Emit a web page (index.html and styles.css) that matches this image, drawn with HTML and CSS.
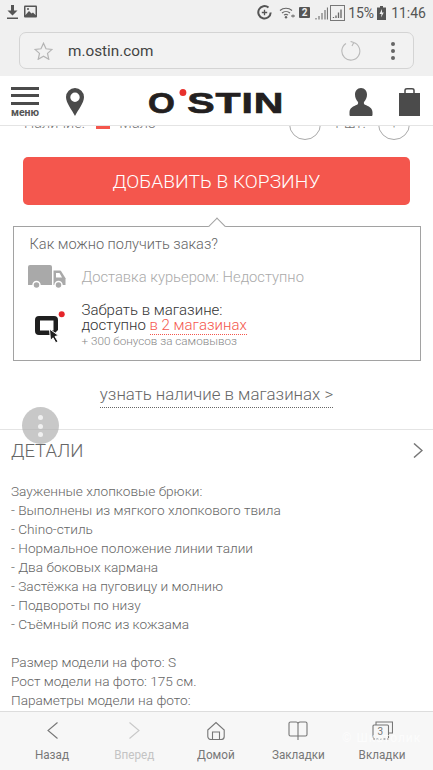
FILE: index.html
```html
<!DOCTYPE html>
<html lang="ru">
<head>
  <meta charset="UTF-8" />
  <meta name="viewport" content="width=device-width, initial-scale=1.0" />
  <title>O'STIN</title>
  <link rel="stylesheet" href="styles.css">
</head>
<body>
  <!-- Android status bar -->
  <div class="status">
    <div class="status-left">
      <svg width="11" height="14" viewBox="0 0 11 14"><path d="M4 0h3v5.500h3.500L5.500 10.500.5 5.500H4z M0 12.500h11V14H0z" fill="#555"/></svg>
      <svg width="13" height="13" viewBox="0 0 13 13"><rect width="13" height="12" y="0.500" rx="1" fill="#555"/><rect x="1.500" y="2" width="10" height="8" fill="#eee"/><path d="M1.500 10 5 6l2.500 2.500L9 7.500l2.500 2.500z" fill="#555"/><circle cx="4" cy="4" r="1" fill="#555"/></svg>
    </div>
    <div class="status-right">
      <svg class="ic-data" width="15" height="15" viewBox="0 0 15 15"><path d="M11.500 2.500A6.200 6.200 0 1 0 13.700 7.500" fill="none" stroke="#555" stroke-width="2"/><path d="M7.500 4.800v5.400M4.800 7.500h5.400" stroke="#555" stroke-width="1.300"/></svg>
      <svg class="ic-wifi" width="16" height="13" viewBox="0 0 16 13"><path d="M1 4.500a9 9 0 0 1 12 0M3 7a6 6 0 0 1 8 0M5 9.200a3 3 0 0 1 4 0" fill="none" stroke="#666" stroke-width="1.100"/><circle cx="7" cy="11.300" r="1.200" fill="#666"/><path d="M12 10h4M14 8.500v3" stroke="#666"/></svg>
      <span class="sim">2</span>
      <svg class="ic-bars" width="13" height="13" viewBox="0 0 13 13"><path d="M1 11v1.500M4 9v3.500M7 6v6.500M10 3v9.500M12.500 0.500v12" stroke="#777" stroke-width="1.200"/></svg>
      <svg class="ic-bars-box" width="15" height="16" viewBox="0 0 15 16"><rect x="0.500" y="0.500" width="14" height="15" fill="none" stroke="#777"/><path d="M3.500 12v1M6 10.500v2.500M8.500 7.500v5.500M11 4.500v8.500" stroke="#666" stroke-width="1.300"/></svg>
      <span class="pct">15%</span>
      <svg class="ic-batt" width="9" height="14" viewBox="0 0 9 14"><path d="M3 0h3v1.500h3V14H0V1.500h3z" fill="#555"/><path d="M5 3 2.500 8h2L4 11.500 6.800 6.500H5z" fill="#eee"/></svg>
      <span class="clock">11:46</span>
    </div>
  </div>

  <!-- Browser address bar -->
  <div class="address-wrap">
    <div class="address">
      <svg class="star" width="19" height="18" viewBox="0 0 19 18"><path d="M9.500 1.200 12 6.800l6 .6-4.500 4 1.300 5.900-5.300-3-5.300 3 1.300-5.900L1 7.400l6-.6z" fill="none" stroke="#b4b4b4" stroke-width="1.200"/></svg>
      <span class="url">m.ostin.com</span>
      <svg class="reload" width="20" height="20" viewBox="0 0 20 20"><path d="M12.500 1.500A9 9 0 1 1 5 2.500" fill="none" stroke="#b9b9b9" stroke-width="1.100"/><path d="M12.800 1.600 9.600 0.400M12.800 1.600 11 5" fill="none" stroke="#b9b9b9" stroke-width="1.100"/></svg>
      <div class="kebab"><i></i><i></i><i></i></div>
    </div>
  </div>

  <!-- Site header -->
  <header class="site-head">
    <div class="burger">
      <span class="burger-lines"><i></i><i></i><i></i></span>
      <span class="burger-label">меню</span>
    </div>
    <svg class="pin" width="18" height="28" viewBox="0 0 18 28"><path fill-rule="evenodd" d="M9 0a9 9 0 0 1 9 9c0 6-6 13-9 19C6 22 0 15 0 9a9 9 0 0 1 9-9zm0 4.500a4.700 4.700 0 1 0 0 9.400 4.700 4.700 0 0 0 0-9.400z" fill="#4b4b4b"/></svg>
    <div class="logo"><span class="logo-o">O</span><span class="logo-dot"></span>STIN</div>
    <svg class="user" width="24" height="28" viewBox="0 0 24 28"><path d="M12 0c3.800 0 6 3 6 6.500 0 3-1.200 5.500-2.800 7.200-.7 1-.4 2.300.8 3 3.500 1.500 7.500 3 7.500 7.500V27c0 .5-.5 1-1 1H1.500c-.5 0-1-.5-1-1v-2.800c0-4.500 4-6 7.500-7.500 1.200-.7 1.500-2 .8-3C7.200 12 6 9.500 6 6.500 6 3 8.200 0 12 0z" fill="#4b4b4b"/></svg>
    <svg class="bag" width="21" height="28" viewBox="0 0 21 28"><path d="M0 5h21v23H0z" fill="#4b4b4b"/><path d="M6 6V2.500C6 1.500 7 .8 8 .8h5c1 0 2 .7 2 1.700V6" fill="none" stroke="#4b4b4b" stroke-width="1.500"/></svg>
  </header>

  <main class="page">
    <!-- Row scrolled almost out of view under the header -->
    <div class="stock-row">
      <div class="stock">Наличие: <i class="stock-mark"></i> Мало</div>
      <div class="qty">
        <span class="qty-btn"></span>
        <span class="qty-val">1 шт.</span>
        <span class="qty-btn">+</span>
      </div>
    </div>

    <button class="buy">ДОБАВИТЬ В КОРЗИНУ</button>

    <section class="delivery">
      <h3 class="delivery-title">Как можно получить заказ?</h3>
      <div class="delivery-row">
        <svg class="truck" width="38" height="24" viewBox="0 0 38 24"><path d="M0 2a2 2 0 0 1 2-2h20a2 2 0 0 1 2 2v18H0z" fill="#a9a9a9"/><path d="M25.500 5.500h6c1 0 1.500.4 2 1.200l4 6.500V20h-12z" fill="#a9a9a9"/><path d="M28 8h3.500l2.500 4.500h-6z" fill="#fff"/><circle cx="8.500" cy="20" r="3.500" fill="#a9a9a9" stroke="#fff" stroke-width="1.500"/><circle cx="30.500" cy="20" r="3.500" fill="#a9a9a9" stroke="#fff" stroke-width="1.500"/></svg>
        <span class="courier">Доставка курьером: Недоступно</span>
      </div>
      <div class="delivery-row pickup">
        <svg class="qicon" width="32" height="33" viewBox="0 0 32 33"><path fill-rule="evenodd" d="M5 6h15a4 4 0 0 1 4 4v10l-5 5H5a4 4 0 0 1-4-4V10a4 4 0 0 1 4-4zm1 4.500v10h13.500v-10z" fill="#1f1f1f"/><circle cx="27.700" cy="4.300" r="3" fill="#e5252a"/><path d="M15.500 19l9 6.500-3.500 1 3 5-2.200 1.300-2.800-5-2.500 2.700z" fill="#1f1f1f" stroke="#fff" stroke-width="1"/></svg>
        <div class="pickup-text">
          <div>Забрать в магазине:</div>
          <div>доступно <a class="stores">в 2 магазинах</a></div>
          <div class="bonus">+ 300 бонусов за самовывоз</div>
        </div>
      </div>
    </section>

    <div class="avail"><a class="avail-link">узнать наличие в магазинах &gt;</a></div>

    <div class="details-head">
      <span>ДЕТАЛИ</span>
      <svg width="10" height="15" viewBox="0 0 10 15"><path d="M1 .5l8 7-8 7" fill="none" stroke="#777" stroke-width="1.500"/></svg>
    </div>

    <div class="details-text">
      <p>Зауженные хлопковые брюки:</p>
      <p>- Выполнены из мягкого хлопкового твила</p>
      <p>- Chino-стиль</p>
      <p>- Нормальное положение линии талии</p>
      <p>- Два боковых кармана</p>
      <p>- Застёжка на пуговицу и молнию</p>
      <p>- Подвороты по низу</p>
      <p>- Съёмный пояс из кожзама</p>
      <p>&nbsp;</p>
      <p>Размер модели на фото: S</p>
      <p>Рост модели на фото: 175 см.</p>
      <p>Параметры модели на фото:</p>
    </div>
  </main>

  <!-- Floating browser button -->
  <div class="fab"><i></i><i></i><i></i></div>

  <!-- Browser bottom toolbar -->
  <nav class="toolbar">
    <div class="tool">
      <svg width="11" height="19" viewBox="0 0 11 19"><path d="M10.500 1.500 1 9.500l9.500 8" fill="none" stroke="#777" stroke-width="1.100"/></svg>
      <span>Назад</span>
    </div>
    <div class="tool off">
      <svg width="11" height="19" viewBox="0 0 11 19"><path d="M.5 1.500l9.500 8-9.500 8" fill="none" stroke="#c8c8c8" stroke-width="1.100"/></svg>
      <span>Вперед</span>
    </div>
    <div class="tool">
      <svg width="18" height="19" viewBox="0 0 18 19"><path d="M.8 9 9 1.500 17.200 9v6.500a3 3 0 0 1-3 3H3.800a3 3 0 0 1-3-3z" fill="none" stroke="#777" stroke-width="1.100"/><path d="M5.500 18.500V11h7v7.500" fill="none" stroke="#777" stroke-width="1.100"/></svg>
      <span>Домой</span>
    </div>
    <div class="tool">
      <svg width="20" height="19" viewBox="0 0 20 19"><path d="M10 3V15H2.500a1.500 1.500 0 0 1-1.500-1.500V2.500A1.500 1.500 0 0 1 2.500 1H8a2 2 0 0 1 2 2zM10 3a2 2 0 0 1 2-2h5.500A1.500 1.500 0 0 1 19 2.500v11a1.500 1.500 0 0 1-1.500 1.500H10v4" fill="none" stroke="#777" stroke-width="1.100"/></svg>
      <span>Закладки</span>
    </div>
    <div class="tool">
      <div class="tabs-icon">
        <svg width="21" height="19" viewBox="0 0 21 19"><path d="M4 4V1h16.500v11H17" fill="none" stroke="#777" stroke-width="1.100"/><path d="M1 17V5a1 1 0 0 1 1-1h13.500a1 1 0 0 1 1 1v12" fill="none" stroke="#777" stroke-width="1.100"/><path d="M1 18h15.500" fill="none" stroke="#777" stroke-width="1.100" stroke-dasharray="2 1.500"/></svg>
        <b class="tabs-count">3</b>
      </div>
      <span>Вкладки</span>
    </div>
    <div class="watermark">© Шкатолик</div>
  </nav>
</body>
</html>
```

FILE: styles.css
```css
* {
  box-sizing: border-box;
}

html, body {
  height: 100%;
}

body {
  margin: 0;
  height: 770px;
  overflow: hidden;
  display: flex;
  flex-direction: column;
  position: relative;
  font-family: Roboto, "Noto Sans", sans-serif;
  background: #fff;
  color: #444;
}

/* status bar */
.status {
  height: 25px;
  padding: 5px 7px 0 7px;
  display: flex;
  justify-content: space-between;
  background: #f0f0f0;
  flex: none;
}

.status-left, .status-right {
  display: flex;
  align-items: flex-start;
}

.status-left {
  gap: 6px;
}

.status-right {
  color: #555;
  font-size: 14px;
  line-height: 17px;
}

.ic-data { margin-right: 7px; }
.ic-wifi { margin-right: 4px; margin-top: 1px; }
.sim {
  width: 11px;
  height: 11px;
  margin: 2px 5px 0 0;
  background: #555;
  border-radius: 1px;
  color: #eee;
  font-size: 10px;
  font-weight: 700;
  line-height: 11px;
  text-align: center;
}
.ic-bars { margin-top: 2px; margin-right: 2px; }
.ic-bars-box { margin-right: 3px; }
.pct { margin-right: 3px; }
.ic-batt { margin-top: 1px; margin-right: 5px; }

/* address bar */
.address-wrap {
  height: 51px;
  padding: 7px 19px 0;
  background: #f0f0f0;
  flex: none;
}

.address {
  height: 37px;
  display: flex;
  align-items: center;
  padding: 0 18px 0 14px;
  border: 1px solid #d4d4d4;
  border-radius: 7px;
  background: #f2f2f2;
}

.url {
  margin-left: 15px;
  font-size: 15.3px;
  color: #444;
  flex: 1;
}

.reload {
  margin-right: 30px;
}

.kebab {
  display: flex;
  flex-direction: column;
  gap: 3px;
}

.kebab i {
  width: 4px;
  height: 4px;
  border-radius: 50%;
  background: #666;
}

/* site header */
.site-head {
  height: 50px;
  display: flex;
  align-items: center;
  padding: 0 13px 0 11px;
  background: #fff;
  border-bottom: 1px solid #e4e4e4;
  position: relative;
  z-index: 2;
  flex: none;
}

.burger {
  width: 28px;
  display: flex;
  flex-direction: column;
  align-items: center;
  margin-right: 27px;
  margin-top: 3px;
}

.burger-lines {
  width: 28px;
  display: flex;
  flex-direction: column;
  gap: 4.500px;
}

.burger-lines i {
  height: 3px;
  background: #4b4b4b;
}

.burger-label {
  font-size: 10.500px;
  font-weight: 700;
  line-height: 11px;
  margin-top: 2px;
  color: #555;
}

.pin {
  margin-top: 2px;
}

.logo {
  margin-left: 64px;
  margin-top: 4px;
  font-family: "Liberation Sans", sans-serif;
  font-weight: 700;
  font-size: 30px;
  line-height: 30px;
  letter-spacing: 0.6px;
  color: #231f20;
  transform: scaleX(1.37);
  transform-origin: left;
  -webkit-text-stroke: 0.7px #231f20;
  white-space: nowrap;
}

.logo-o {
  display: inline-block;
  margin-right: -3.800px;
  transform: scaleX(0.84);
  transform-origin: left;
}

.logo-dot {
  display: inline-block;
  width: 5px;
  height: 7px;
  margin: 0 1px 0 2.500px;
  border-radius: 50%;
  background: #e8302c;
  vertical-align: 17px;
}

.user {
  margin-left: auto;
  margin-top: 2px;
  margin-right: 26px;
}

.bag {
  margin-top: 2px;
}

/* scrolled page */
.page {
  flex: 1;
  min-height: 0;
  overflow: hidden;
}

.stock-row {
  height: 32px;
  margin-top: -18px;
  padding: 0 23px 0 24px;
  display: flex;
  align-items: center;
  justify-content: space-between;
  font-size: 14.500px;
  font-weight: 300;
  color: #777;
}

.stock {
  margin-bottom: 2px;
}

.stock-mark {
  display: inline-block;
  width: 14px;
  height: 14px;
  margin: 0 5.500px 0 8px;
  background: #f4564d;
  vertical-align: -1px;
}

.qty {
  display: flex;
  align-items: center;
  gap: 12px;
}

.qty-val {
  margin-bottom: 2px;
}

.qty-btn {
  width: 32px;
  height: 32px;
  border: 1px solid #aaa;
  border-radius: 50%;
  text-align: center;
  line-height: 30px;
}

.buy {
  display: block;
  width: 387px;
  height: 48px;
  margin: 17px 0 0 23px;
  border: none;
  border-radius: 5px;
  background: #f4564d;
  color: #fff;
  font-family: inherit;
  font-size: 19.200px;
  font-weight: 300;
}

.delivery {
  position: relative;
  width: 408px;
  height: 135px;
  margin: 21px 0 0 13px;
  padding: 7.500px 15.500px 0;
  border: 1.500px solid #a2a2a2;
}

/* notch on the top edge of the box */
.delivery::before {
  content: "";
  position: absolute;
  left: 197px;
  top: -7px;
  width: 11px;
  height: 11px;
  background: #fff;
  border-top: 1px solid #a2a2a2;
  border-left: 1px solid #a2a2a2;
  transform: rotate(45deg);
}

.delivery-title {
  position: relative;
  margin: 0 0 12.500px;
  font-size: 14.600px;
  line-height: 18px;
  font-weight: 300;
  color: #666;
}

.delivery-row {
  display: flex;
  align-items: center;
  gap: 15.500px;
}

.truck {
  margin-left: -1.500px;
}

.courier {
  font-size: 14.750px;
  font-weight: 300;
  color: #aaa;
}

.pickup {
  margin-top: 14px;
  align-items: flex-start;
  gap: 16px;
}

.qicon {
  margin-left: 4px;
  margin-top: 6.500px;
}

.pickup-text {
  font-size: 15px;
  line-height: 15px;
  font-weight: 300;
  color: #333;
}

.stores {
  color: #f4564d;
  border-bottom: 1px dotted #f4564d;
}

.bonus {
  font-size: 11.700px;
  line-height: 17px;
  color: #888;
}

.avail {
  margin-top: 23px;
  text-align: center;
  font-size: 16.850px;
  line-height: 21px;
  font-weight: 300;
  color: #666;
}

.avail-link {
  display: inline-block;
  padding-bottom: 2px;
  border-bottom: 1px dotted #666;
}

.details-head {
  margin-top: 21px;
  height: 42px;
  padding: 0 10px 0 11px;
  display: flex;
  align-items: center;
  justify-content: space-between;
  border-top: 1px solid #e4e4e4;
  font-size: 18.500px;
  font-weight: 300;
  color: #666;
}

.details-text {
  margin-top: 10.500px;
  padding: 0 11px;
  font-size: 13.650px;
  line-height: 19px;
  font-weight: 300;
  color: #666;
}

.details-text p {
  margin: 0;
}

/* floating button over the page */
.fab {
  position: absolute;
  left: 22px;
  top: 407px;
  width: 37px;
  height: 37px;
  padding-top: 8px;
  border-radius: 50%;
  background: rgba(170, 170, 170, 0.65);
  display: flex;
  flex-direction: column;
  align-items: center;
  gap: 3.500px;
  z-index: 3;
}

.fab i {
  width: 5px;
  height: 5px;
  border-radius: 50%;
  background: #f0f0f0;
}

/* bottom toolbar */
.toolbar {
  height: 59px;
  flex: none;
  position: relative;
  display: grid;
  grid-template-columns: 82px 82px 82px 82px 86px;
  padding: 9px 0 0 11px;
  background: #f7f7f7;
  border-top: 1px solid #ddd;
}

.tool {
  display: flex;
  flex-direction: column;
  align-items: center;
  gap: 7px;
  font-size: 13px;
  line-height: 16px;
  font-weight: 400;
  color: #777;
}

.tool span {
  transform: scaleX(0.9);
}

.tool.off {
  color: #c4c4c4;
}

.tabs-icon {
  position: relative;
  height: 19px;
}

.tabs-count {
  position: absolute;
  left: 6px;
  top: 5px;
  font-size: 10px;
  line-height: 12px;
  font-weight: 400;
  color: #777;
}

.watermark {
  position: absolute;
  left: 342px;
  top: 17px;
  font-size: 12px;
  line-height: 18px;
  letter-spacing: 1px;
  color: #fff;
  opacity: 0.7;
  white-space: nowrap;
}
```
